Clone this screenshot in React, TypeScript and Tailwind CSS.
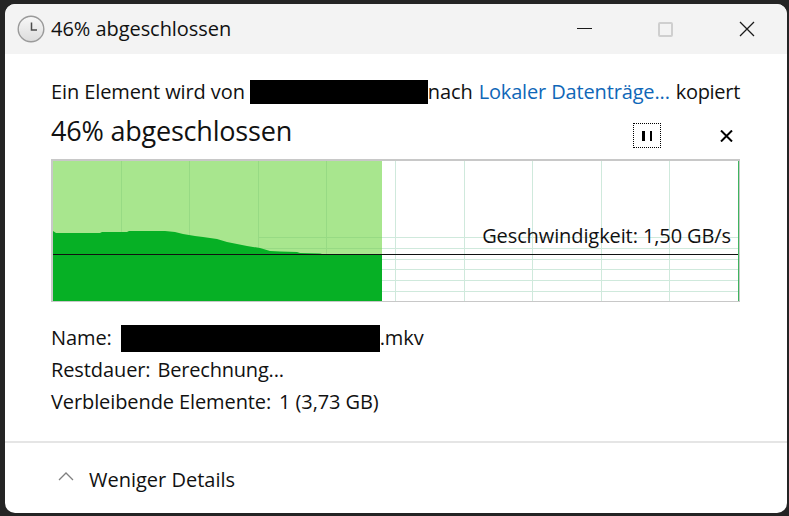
import React from "react";

const vLinesGreen = [121.5, 189.5, 258.5, 326.5];
const vLinesWhite = [395.5, 464.5, 532.5, 601.5, 669.5];
const hLines = [237.5, 248.5, 259.5, 269.5, 280.5, 291.5];

function Graph() {
  const area =
    "53,231 56,233 100,233 102,232 127,232 129,231 165,231 175,232 183,234 195,236 203,237 217,239 227,242 237,244 247,246 260,248 270,251 280,251.5 297,252 300,253 320,253.5 322,254 322,254.5 53,254.5";
  return (
    <svg className="block w-[689px] h-[143px]" viewBox="51 159 689 143" shapeRendering="crispEdges">
      <rect x="52" y="160" width="687" height="141.5" fill="#ffffff" stroke="#c8c8c8" strokeWidth="2" />
      {vLinesWhite.map((x) => (
        <line key={x} x1={x} x2={x} y1="161" y2="301" stroke="#cfe9dc" />
      ))}
      {hLines.map((y) => (
        <line key={y} x1="382" x2="738" y1={y} y2={y} stroke="#cfe9dc" />
      ))}
      <rect x="53" y="161" width="329" height="140" fill="#a8e68e" />
      {vLinesGreen.map((x) => (
        <line key={x} x1={x} x2={x} y1="161" y2="254" stroke="#97da84" />
      ))}
      {hLines.slice(0, 2).map((y) => (
        <line key={y} x1="258" x2="382" y1={y} y2={y} stroke="#97da84" />
      ))}
      <polygon points={area} fill="#06b025" shapeRendering="auto" />
      <rect x="53" y="254" width="329" height="47" fill="#06b025" />
      <line x1="53" x2="738" y1="254.5" y2="254.5" stroke="#111111" />
      <line x1="738.5" x2="738.5" y1="161" y2="301" stroke="#3fb55f" />
    </svg>
  );
}

function ClockIcon() {
  return (
    <svg width="28" height="28" viewBox="0 0 28 28" className="shrink-0">
      <defs>
        <linearGradient id="clockFace" x1="0" y1="0" x2="0" y2="1">
          <stop offset="0" stopColor="#f8f8f8" />
          <stop offset="1" stopColor="#dcdcdc" />
        </linearGradient>
      </defs>
      <circle cx="14" cy="14" r="12.8" fill="url(#clockFace)" stroke="#9a9a9a" strokeWidth="1.4" />
      <path d="M14.5 7.5V15H20" fill="none" stroke="#4d4d4d" strokeWidth="1.5" />
    </svg>
  );
}

export default function App() {
  return (
    <div
      className="w-[789px] h-[516px] bg-[#242424] pt-[4px] pl-[5px] pr-[2px] pb-[3px] overflow-hidden text-[#111111] text-[20px] tracking-[-0.1px]"
      style={{ fontFamily: '"Open Sans", "Noto Sans", sans-serif' }}
    >
      <div className="h-full bg-white rounded-[10px] overflow-hidden flex flex-col">
        <div className="h-[50px] shrink-0 bg-[#f3f3f3] flex items-center pl-[12px]">
          <ClockIcon />
          <span className="ml-[6px] leading-none tracking-[-0.05px]">46% abgeschlossen</span>
          <div className="ml-auto flex items-center">
            <svg width="15" height="16" viewBox="0 0 15 16" className="mr-[66px]">
              <line x1="0" x2="15" y1="7.5" y2="7.5" stroke="#1a1a1a" strokeWidth="1" />
            </svg>
            <div className="w-[15px] h-[15px] rounded-[2px] border-2 border-[#cfcfcf] mr-[66px]" />
            <svg width="16" height="16" viewBox="0 0 16 16" className="mr-[32px]">
              <path d="M1 1L15 15M15 1L1 15" stroke="#1a1a1a" strokeWidth="1.3" fill="none" />
            </svg>
          </div>
        </div>

        <div className="flex-1 flex flex-col pl-[46px] pr-[47px]">
          <div className="h-[24px] mt-[26px] flex items-center whitespace-nowrap">
            <span>Ein Element wird von</span>
            <div className="w-[178px] h-[24px] bg-black ml-[5px] shrink-0" />
            <span>nach</span>
            <span className="ml-[6px] text-[#0f67b8] tracking-[-0.15px]">Lokaler Datenträge...</span>
            <span className="ml-[6px] tracking-[-0.3px]">kopiert</span>
          </div>

          <div className="h-[36px] mt-[8px] mb-[1px] flex items-center">
            <span className="text-[27px] leading-none tracking-[-0.2px]">46% abgeschlossen</span>
            <button className="ml-auto w-[28px] h-[25px] border border-dotted border-black flex items-center justify-center gap-[5px] mt-[11px]">
              <span className="w-[2.5px] h-[10px] bg-black" />
              <span className="w-[2.5px] h-[10px] bg-black" />
            </button>
            <svg width="13" height="12" viewBox="0 0 13 12" className="ml-[59px] mr-[7px] mt-[11px]">
              <path d="M1 0.5L12 11.5M12 0.5L1 11.5" stroke="#000000" strokeWidth="2" fill="none" />
            </svg>
          </div>

          <div className="relative mt-[10px] w-[689px]">
            <Graph />
            <span className="absolute right-[9px] top-[65px] leading-[24px] whitespace-nowrap">Geschwindigkeit: 1,50 GB/s</span>
          </div>

          <div className="mt-[20px] flex flex-col">
            <div className="h-[32px] flex items-center">
              <span>Name:</span>
              <div className="w-[259px] h-[27px] bg-black ml-[9px] shrink-0" />
              <span>.mkv</span>
            </div>
            <div className="h-[32px] flex items-center gap-[7px]">
              <span>Restdauer:</span>
              <span className="tracking-[-0.2px]">Berechnung...</span>
            </div>
            <div className="h-[32px] flex items-center gap-[8px]">
              <span>Verbleibende Elemente:</span>
              <span>1 (3,73 GB)</span>
            </div>
          </div>
        </div>

        <div className="h-[72px] shrink-0 border-t-2 border-[#e5e5e5] flex items-center pl-[53px] pt-[3px]">
          <svg width="16" height="10" viewBox="0 0 16 10" className="mb-[7px]">
            <path d="M1 9L8 2L15 9" fill="none" stroke="#808080" strokeWidth="1.3" />
          </svg>
          <span className="ml-[15px] tracking-[0px]">Weniger Details</span>
        </div>
      </div>
    </div>
  );
}
